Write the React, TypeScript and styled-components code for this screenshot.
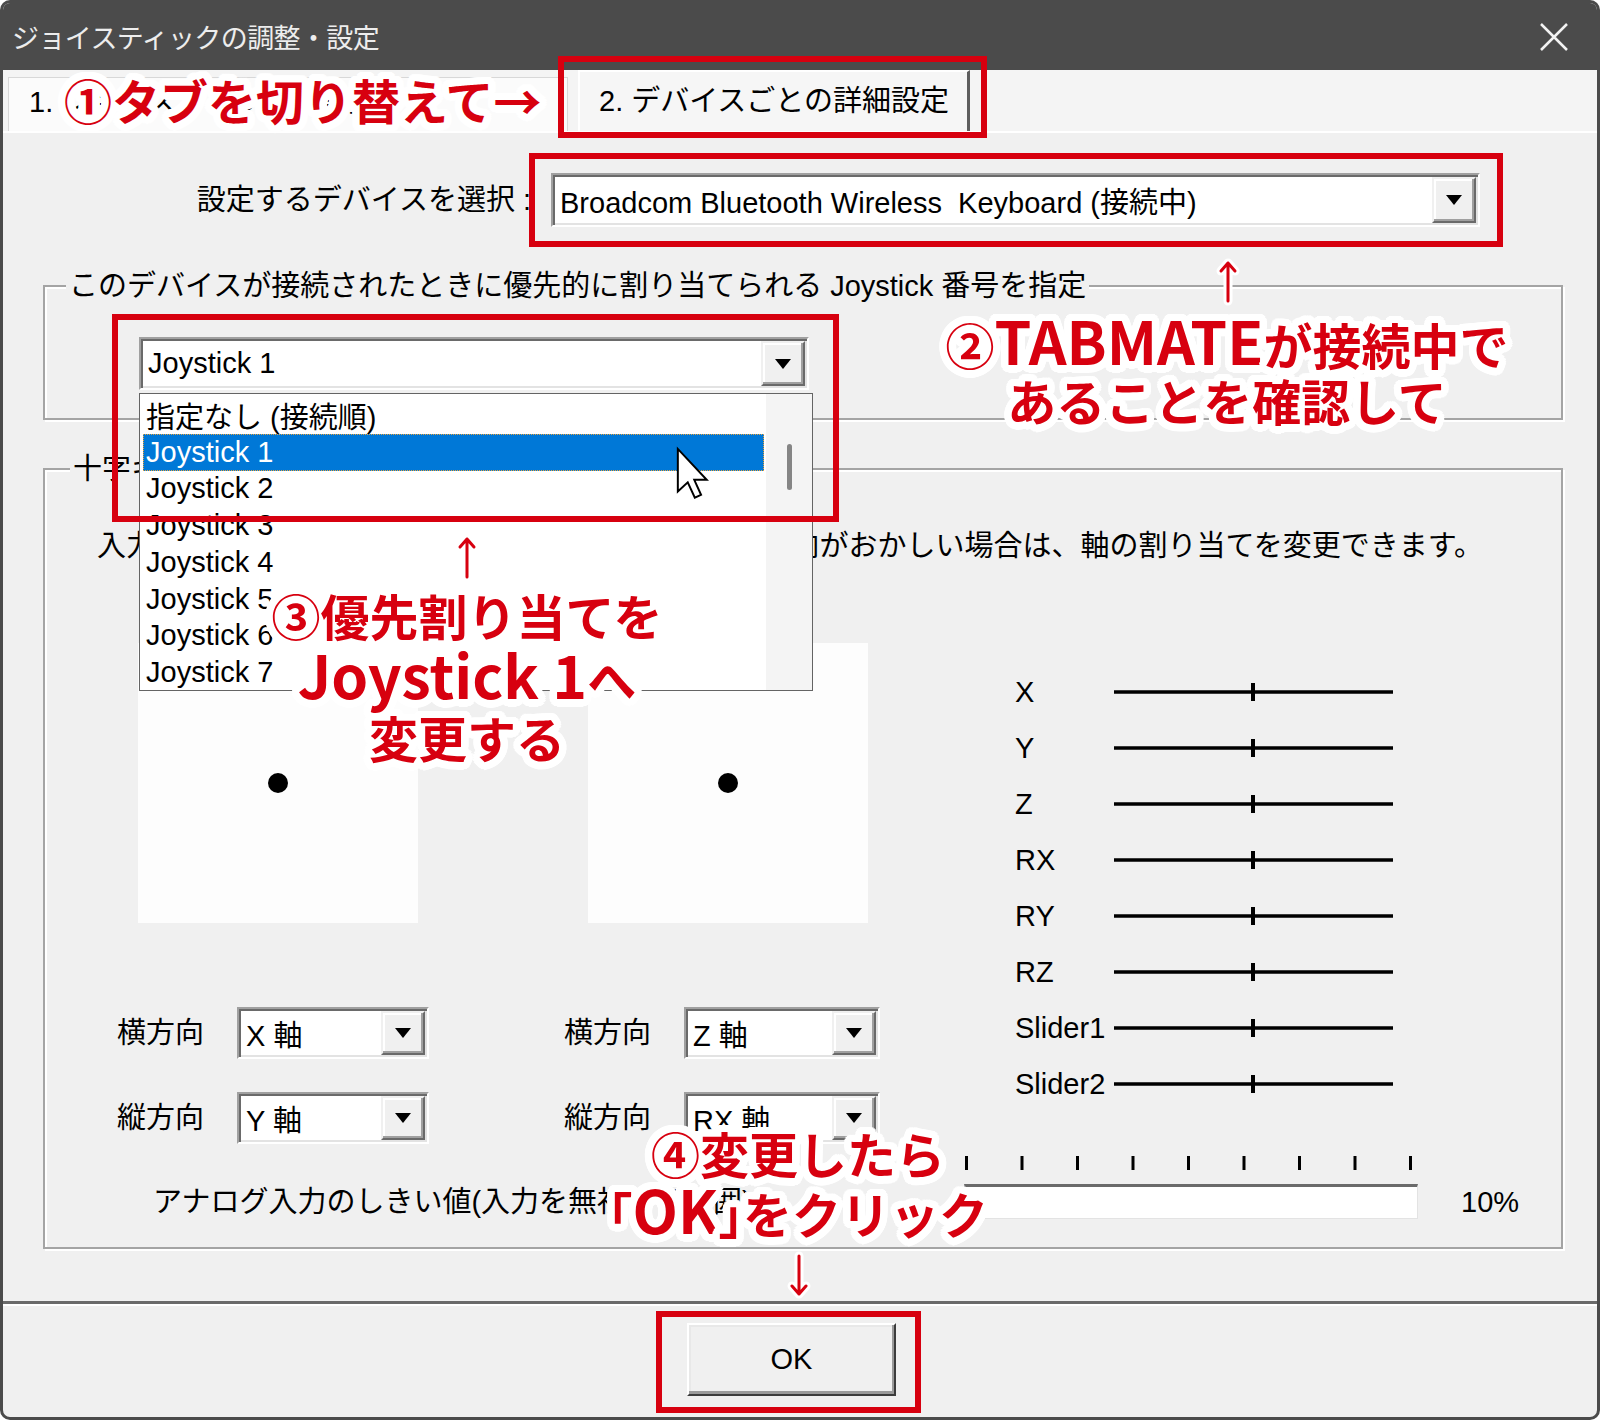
import React from "react";
import styled, { createGlobalStyle, css } from "styled-components";

const UI = `"Liberation Sans", "Noto Sans CJK JP", sans-serif`;
const JP = `"Noto Sans CJK JP", "Liberation Sans", sans-serif`;
const RED = "#d7000f";

const makeHalo = () => {
  const out: string[] = [];
  const rings: [number, number][] = [
    [2.5, 12],
    [5, 20],
    [7.5, 28],
  ];
  rings.forEach(([r, n]) => {
    for (let i = 0; i < n; i++) {
      const a = (i / n) * Math.PI * 2;
      out.push(`${(Math.cos(a) * r).toFixed(2)}px ${(Math.sin(a) * r).toFixed(2)}px 0 #fff`);
    }
  });
  return out.join(", ");
};
const HALO = makeHalo();

const GlobalStyle = createGlobalStyle`
  html, body { margin: 0; padding: 0; background: #ffffff; }
  body { font-family: ${UI}; }
  * { box-sizing: border-box; }
`;

const Window = styled.div`
  position: relative;
  width: 1600px;
  height: 1420px;
  display: flex;
  flex-direction: column;
  background: #f0f0f0;
  border: 3px solid #4b4b4b;
  border-radius: 10px;
  overflow: hidden;
  color: #000;
`;

const TitleBar = styled.div`
  height: 67px;
  flex: none;
  display: flex;
  align-items: center;
  justify-content: space-between;
  padding: 0 28px 0 9px;
  background: #4b4b4b;
  color: #ededed;
  font-family: ${JP};
  font-size: 27px;
  letter-spacing: -0.6px;
`;

const TabStrip = styled.div`
  height: 61px;
  flex: none;
  display: flex;
  align-items: flex-end;
  gap: 10px;
  padding-left: 5px;
  background: #f4f4f4;
`;

const Tab = styled.div<{ $active?: boolean; $w: number }>`
  width: ${(p) => p.$w}px;
  height: ${(p) => (p.$active ? 61 : 54)}px;
  padding: ${(p) => (p.$active ? "12px 0 0 19px" : "7px 0 0 20px")};
  font-family: ${UI};
  font-size: 29px;
  line-height: 34px;
  white-space: nowrap;
  overflow: hidden;
  background: #fbfbfb;
  border: 1px solid #d8d8d8;
  border-bottom: none;
  ${(p) =>
    p.$active &&
    css`
      background: #f6f6f6;
      border-top: 2px solid #ffffff;
      border-left: 2px solid #ffffff;
      border-right: 3px solid #5e5e5e;
    `}
`;

const TabPanel = styled.div`
  flex: none;
  height: 1173px;
  display: flex;
  flex-direction: column;
  padding-top: 40px;
  border-top: 2px solid #ffffff;
  border-bottom: 3px solid #6a6a6a;
`;

const DeviceRow = styled.div`
  display: flex;
  align-items: center;
  gap: 20px;
  padding-left: 190px;
  height: 54px;
`;

const FieldLabel = styled.div<{ $w: number; $align?: string }>`
  width: ${(p) => p.$w}px;
  flex: none;
  text-align: ${(p) => p.$align || "left"};
  font-family: ${UI};
  font-size: 29px;
  line-height: 34px;
  white-space: nowrap;
`;

const ComboBox = styled.div<{ $w: number; $h: number }>`
  width: ${(p) => p.$w}px;
  height: ${(p) => p.$h}px;
  flex: none;
  display: flex;
  background: #ffffff;
  border-style: solid;
  border-width: 2px;
  border-color: #a0a0a0 #ffffff #ffffff #a0a0a0;
  box-shadow: inset 2px 2px 0 #6a6a6a, inset -2px -2px 0 #e3e3e3;
  padding: 2px;
`;

const ComboText = styled.div`
  flex: 1;
  display: flex;
  align-items: center;
  padding-left: 5px;
  font-family: ${UI};
  font-size: 29px;
  white-space: pre;
  overflow: hidden;
`;

const ComboButton = styled.div`
  width: 44px;
  flex: none;
  display: flex;
  align-items: center;
  justify-content: center;
  background: #f0f0f0;
  border-style: solid;
  border-width: 2px;
  border-color: #f0f0f0 #6a6a6a #6a6a6a #f0f0f0;
  box-shadow: inset -2px -2px 0 #a0a0a0, inset 2px 2px 0 #ffffff;
`;

const DropTriangle = styled.span`
  width: 0;
  height: 0;
  border-left: 8px solid transparent;
  border-right: 8px solid transparent;
  border-top: 10px solid #000;
`;

const GroupBox = styled.fieldset<{ $mt: number }>`
  margin: ${(p) => p.$mt}px 34px 0 40px;
  padding: 0;
  min-inline-size: 0;
  border: 2px solid #a4a4a4;
  box-shadow: inset 2px 2px 0 #ffffff, 2px 2px 0 #ffffff;
`;

const GroupLegend = styled.legend<{ $ml: number }>`
  margin-left: ${(p) => p.$ml}px;
  padding: 0 3px;
  background: #f0f0f0;
  font-family: ${UI};
  font-size: 29px;
  line-height: 34px;
  white-space: nowrap;
`;

const JoystickSlot = styled.div`
  position: relative;
  width: 670px;
  margin: 34px 0 28px 94px;
`;

const DropList = styled.div`
  position: absolute;
  left: 0;
  top: calc(100% + 3px);
  width: 674px;
  height: 298px;
  z-index: 10;
  display: flex;
  background: #ffffff;
  border: 1px solid #646464;
`;

const ListItems = styled.div`
  flex: 1;
  padding-top: 3px;
`;

const ListItem = styled.div<{ $selected?: boolean }>`
  height: 36.75px;
  margin: 0 2px 0 3px;
  padding-left: 3px;
  display: flex;
  align-items: center;
  font-family: ${UI};
  font-size: 29px;
  white-space: nowrap;
  ${(p) =>
    p.$selected &&
    css`
      background: #0078d7;
      color: #ffffff;
      outline: 1px dotted #e8a33d;
      outline-offset: -1px;
    `}
`;

const ScrollTrack = styled.div`
  width: 46px;
  flex: none;
  display: flex;
  justify-content: center;
  background: #f4f4f4;
`;

const ScrollThumb = styled.div`
  width: 5px;
  height: 46px;
  margin-top: 50px;
  border-radius: 3px;
  background: #858585;
`;

const Cursor = styled.svg`
  position: absolute;
  left: 535px;
  top: 52px;
  z-index: 2;
`;

const Instruction = styled.div`
  margin: 43px 0 0 52px;
  font-family: ${UI};
  font-size: 29px;
  line-height: 34px;
  white-space: nowrap;
`;

const MainGrid = styled.div`
  margin: 80px 0 0 72px;
  display: grid;
  grid-template-columns: 447px 451px 1fr;
`;

const StickColumn = styled.div`
  display: flex;
  flex-direction: column;
`;

const Preview = styled.div<{ $ml: number }>`
  width: 280px;
  height: 280px;
  margin-left: ${(p) => p.$ml}px;
  display: flex;
  align-items: center;
  justify-content: center;
  background: #fdfdfd;
`;

const AxisSelectors = styled.div`
  margin-top: 84px;
  display: flex;
  flex-direction: column;
  gap: 33px;
`;

const SelectorRow = styled.div`
  display: flex;
  align-items: center;
  gap: 20px;
  height: 52px;
`;

const AxisColumn = styled.div`
  padding-top: 21px;
  display: flex;
  flex-direction: column;
`;

const AxisRow = styled.div`
  height: 56px;
  display: flex;
  align-items: center;
`;

const ThresholdRow = styled.div`
  margin: 8px 0 28px 108px;
  display: grid;
  grid-template-columns: 811px 454px auto;
  align-items: end;
`;

const TrackArea = styled.div`
  display: flex;
  flex-direction: column;
  gap: 14px;
`;

const TrackBox = styled.div`
  height: 35px;
  background: #ffffff;
  border-top: 3px solid #6a6a6a;
  border-left: 2px solid #a0a0a0;
  border-right: 1px solid #e3e3e3;
  border-bottom: 1px solid #e3e3e3;
`;

const Percent = styled.div`
  margin-left: 43px;
  font-family: ${UI};
  font-size: 29px;
  line-height: 34px;
`;

const Footer = styled.div`
  flex: 1;
  padding: 17px 0 0 684px;
  border-top: 2px solid #ffffff;
`;

const OkButton = styled.div`
  width: 209px;
  height: 73px;
  display: flex;
  align-items: center;
  justify-content: center;
  background: #f0f0f0;
  border-style: solid;
  border-width: 2px;
  border-color: #ffffff #3c3c3c #3c3c3c #ffffff;
  box-shadow: inset -2px -3px 0 #9a9a9a, inset 2px 2px 0 #e8e8e8;
  font-family: ${UI};
  font-size: 29px;
`;

const RedFrame = styled.div<{ $x: number; $y: number; $w: number; $h: number }>`
  position: absolute;
  left: ${(p) => p.$x}px;
  top: ${(p) => p.$y}px;
  width: ${(p) => p.$w}px;
  height: ${(p) => p.$h}px;
  border: 6px solid ${RED};
  z-index: 20;
  pointer-events: none;
`;

const Callout = styled.div<{ $x: number; $y: number; $w: number; $lh: number; $fs: number; $align?: string }>`
  position: absolute;
  left: ${(p) => p.$x}px;
  top: ${(p) => p.$y}px;
  width: ${(p) => p.$w}px;
  z-index: 30;
  text-align: ${(p) => p.$align || "center"};
  font-family: ${JP};
  font-weight: 700;
  font-size: ${(p) => p.$fs}px;
  line-height: ${(p) => p.$lh}px;
  color: ${RED};
  text-shadow: ${HALO};
  white-space: nowrap;
`;

const LatinRun = styled.span`
  font-size: 59px;
`;

const HalfBracket = styled.span`
  font-feature-settings: "halt" 1;
`;

const ArrowMark = styled.svg<{ $x: number; $y: number }>`
  position: absolute;
  left: ${(p) => p.$x}px;
  top: ${(p) => p.$y}px;
  z-index: 30;
  overflow: visible;
`;

const Combo: React.FC<{ w: number; h: number; text: string }> = ({ w, h, text }) => (
  <ComboBox $w={w} $h={h}>
    <ComboText>{text}</ComboText>
    <ComboButton>
      <DropTriangle />
    </ComboButton>
  </ComboBox>
);

const Arrow: React.FC<{ x: number; y: number; down?: boolean }> = ({ x, y, down }) => (
  <ArrowMark $x={x} $y={y} width={24} height={44} viewBox="0 0 24 44">
    <g transform={down ? "rotate(180 12 22)" : undefined} fill="none" strokeLinecap="round" strokeLinejoin="round">
      <path d="M12 41 V3 M5 11 L12 3 L19 11" stroke="#ffffff" strokeWidth={9} />
      <path d="M12 41 V3 M5 11 L12 3 L19 11" stroke={RED} strokeWidth={3} />
    </g>
  </ArrowMark>
);

const Slider: React.FC = () => (
  <svg width={279} height={20} viewBox="0 0 279 20">
    <line x1={0} y1={10} x2={279} y2={10} stroke="#000" strokeWidth={3.5} />
    <line x1={139} y1={1} x2={139} y2={19} stroke="#000" strokeWidth={4} />
  </svg>
);

const Dot: React.FC = () => (
  <svg width={24} height={24} viewBox="0 0 24 24">
    <circle cx={12} cy={12} r={10} fill="#000" />
  </svg>
);

const Ticks: React.FC = () => (
  <svg width={454} height={18} viewBox="0 0 454 18">
    {Array.from({ length: 9 }).map((_, i) => (
      <rect key={i} x={1 + i * 55.5} y={4} width={3} height={14} fill="#000" />
    ))}
  </svg>
);

const axes = ["X", "Y", "Z", "RX", "RY", "RZ", "Slider1", "Slider2"];
const items = [
  "指定なし (接続順)",
  "Joystick 1",
  "Joystick 2",
  "Joystick 3",
  "Joystick 4",
  "Joystick 5",
  "Joystick 6",
  "Joystick 7",
];

export default function App() {
  return (
    <>
      <GlobalStyle />
      <Window>
        <TitleBar>
          <span>ジョイスティックの調整・設定</span>
          <svg width={30} height={30} viewBox="0 0 30 30">
            <path d="M2 2 L28 28 M28 2 L2 28" stroke="#f2f2f2" strokeWidth={2.5} />
          </svg>
        </TitleBar>

        <TabStrip>
          <Tab $w={560}>1. ジョイスティックの調整</Tab>
          <Tab $w={392} $active>
            2. デバイスごとの詳細設定
          </Tab>
        </TabStrip>

        <TabPanel>
          <DeviceRow>
            <FieldLabel $w={338} $align="right">
              設定するデバイスを選択 :
            </FieldLabel>
            <Combo w={929} h={54} text="Broadcom Bluetooth Wireless  Keyboard (接続中)" />
          </DeviceRow>

          <GroupBox $mt={42}>
            <GroupLegend $ml={21}>このデバイスが接続されたときに優先的に割り当てられる Joystick 番号を指定</GroupLegend>
            <JoystickSlot>
              <Combo w={670} h={53} text="Joystick 1" />
              <DropList>
                <ListItems>
                  {items.map((t) => (
                    <ListItem key={t} $selected={t === "Joystick 1"}>
                      {t}
                    </ListItem>
                  ))}
                </ListItems>
                <ScrollTrack>
                  <ScrollThumb />
                </ScrollTrack>
                <Cursor width={34} height={54} viewBox="0 0 12 19">
                  <path
                    d="M1 1 V16 L4.5 12.8 L7 18.2 L9.2 17.2 L6.8 11.9 H11.2 Z"
                    fill="#ffffff"
                    stroke="#000"
                    strokeWidth={0.7}
                    strokeLinejoin="miter"
                  />
                </Cursor>
              </DropList>
            </JoystickSlot>
          </GroupBox>

          <GroupBox $mt={32}>
            <GroupLegend $ml={25}>十字キー・スティックの設定</GroupLegend>
            <Instruction>
              入力に対してスティックやボタンの実際の動作する方向がおかしい場合は、軸の割り当てを変更できます。
            </Instruction>
            <MainGrid>
              <StickColumn>
                <Preview $ml={21}>
                  <Dot />
                </Preview>
                <AxisSelectors>
                  <SelectorRow>
                    <FieldLabel $w={100}>横方向</FieldLabel>
                    <Combo w={192} h={52} text="X 軸" />
                  </SelectorRow>
                  <SelectorRow>
                    <FieldLabel $w={100}>縦方向</FieldLabel>
                    <Combo w={192} h={52} text="Y 軸" />
                  </SelectorRow>
                </AxisSelectors>
              </StickColumn>
              <StickColumn>
                <Preview $ml={24}>
                  <Dot />
                </Preview>
                <AxisSelectors>
                  <SelectorRow>
                    <FieldLabel $w={100}>横方向</FieldLabel>
                    <Combo w={196} h={52} text="Z 軸" />
                  </SelectorRow>
                  <SelectorRow>
                    <FieldLabel $w={100}>縦方向</FieldLabel>
                    <Combo w={196} h={52} text="RX 軸" />
                  </SelectorRow>
                </AxisSelectors>
              </StickColumn>
              <AxisColumn>
                {axes.map((a) => (
                  <AxisRow key={a}>
                    <FieldLabel $w={99}>{a}</FieldLabel>
                    <Slider />
                  </AxisRow>
                ))}
              </AxisColumn>
            </MainGrid>
            <ThresholdRow>
              <FieldLabel $w={811}>アナログ入力のしきい値(入力を無視する範囲)</FieldLabel>
              <TrackArea>
                <Ticks />
                <TrackBox />
              </TrackArea>
              <Percent>10%</Percent>
            </ThresholdRow>
          </GroupBox>
        </TabPanel>

        <Footer>
          <OkButton>OK</OkButton>
        </Footer>

        <RedFrame $x={555} $y={53} $w={429} $h={82} />
        <RedFrame $x={526} $y={150} $w={974} $h={94} />
        <RedFrame $x={109} $y={311} $w={727} $h={208} />
        <RedFrame $x={653} $y={1308} $w={265} $h={102} />

        <Callout $x={61} $y={68} $w={520} $lh={56} $fs={48} $align="left">
          ①タブを切り替えて→
        </Callout>
        <Callout $x={894} $y={309} $w={660} $lh={56} $fs={49}>
          ②<LatinRun>TABMATE</LatinRun>が接続中で
          <br />
          あることを確認して
        </Callout>
        <Callout $x={164} $y={582} $w={600} $lh={59} $fs={49}>
          ③優先割り当てを
          <br />
          <LatinRun>Joystick 1</LatinRun>へ
          <br />
          変更する
        </Callout>
        <Callout $x={545} $y={1122} $w={500} $lh={56} $fs={49}>
          ④変更したら
          <br />
          <HalfBracket>「</HalfBracket>
          <LatinRun>OK</LatinRun>
          <HalfBracket>」</HalfBracket>をクリック
        </Callout>

        <Arrow x={1213} y={257} />
        <Arrow x={452} y={533} />
        <Arrow x={784} y={1250} down />
      </Window>
    </>
  );
}
